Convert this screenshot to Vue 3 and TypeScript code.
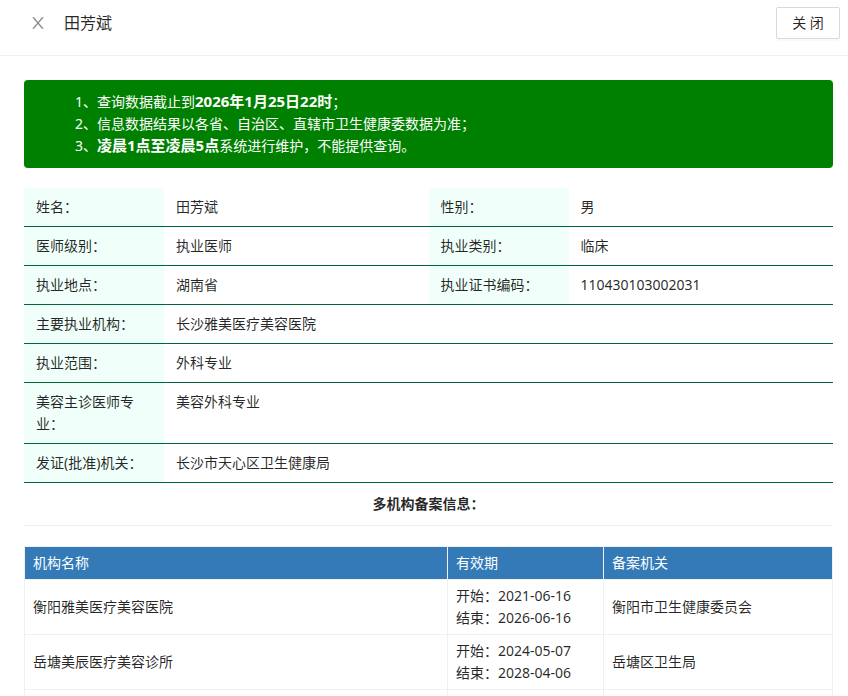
<script setup lang="ts">
interface Field {
  label: string
  value: string
}

interface Filing {
  name: string
  start: string
  end: string
  authority: string
}

const doctorName = '田芳斌'

const infoRows: Field[][] = [
  [
    { label: '姓名', value: '田芳斌' },
    { label: '性别', value: '男' },
  ],
  [
    { label: '医师级别', value: '执业医师' },
    { label: '执业类别', value: '临床' },
  ],
  [
    { label: '执业地点', value: '湖南省' },
    { label: '执业证书编码', value: '110430103002031' },
  ],
  [{ label: '主要执业机构', value: '长沙雅美医疗美容医院' }],
  [{ label: '执业范围', value: '外科专业' }],
  [{ label: '美容主诊医师专业', value: '美容外科专业' }],
  [{ label: '发证(批准)机关', value: '长沙市天心区卫生健康局' }],
]

const filings: Filing[] = [
  { name: '衡阳雅美医疗美容医院', start: '2021-06-16', end: '2026-06-16', authority: '衡阳市卫生健康委员会' },
  { name: '岳塘美辰医疗美容诊所', start: '2024-05-07', end: '2028-04-06', authority: '岳塘区卫生局' },
]
</script>

<template>
  <div class="drawer">
    <header class="head">
      <button type="button" class="dismiss">
        <svg viewBox="64 64 896 896" width="16" height="16" fill="currentColor" aria-hidden="true">
          <path
            d="M563.8 512l262.5-312.9c4.4-5.2.7-13.1-6.1-13.1h-79.8c-4.7 0-9.2 2.1-12.3 5.7L511.6 449.8 295.1 191.7c-3-3.6-7.5-5.7-12.3-5.7H203c-6.8 0-10.5 7.9-6.1 13.1L459.4 512 196.9 824.9A7.95 7.95 0 00203 838h79.8c4.7 0 9.2-2.1 12.3-5.7l216.5-258.1 216.5 258.1c3 3.6 7.5 5.7 12.3 5.7h79.8c6.8 0 10.5-7.9 6.1-13.1L563.8 512z"
          />
        </svg>
      </button>
      <h1 class="title">{{ doctorName }}</h1>
      <button type="button" class="close">关 闭</button>
    </header>

    <main class="body">
      <div class="notice">
        <p>1、查询数据截止到<strong>2026年1月25日22时</strong>；</p>
        <p>2、信息数据结果以各省、自治区、直辖市卫生健康委数据为准；</p>
        <p>3、<strong>凌晨1点至凌晨5点</strong>系统进行维护，不能提供查询。</p>
      </div>

      <table class="info">
        <colgroup>
          <col class="label-col" />
          <col />
          <col class="label-col" />
          <col />
        </colgroup>
        <tbody>
          <tr v-for="(row, i) in infoRows" :key="i">
            <template v-for="field in row" :key="field.label">
              <th scope="row">{{ field.label }}：</th>
              <td :colspan="row.length === 1 ? 3 : 1">{{ field.value }}</td>
            </template>
          </tr>
        </tbody>
      </table>

      <h2 class="section">多机构备案信息：</h2>

      <table class="filings">
        <colgroup>
          <col />
          <col class="period-col" />
          <col class="authority-col" />
        </colgroup>
        <thead>
          <tr>
            <th scope="col">机构名称</th>
            <th scope="col">有效期</th>
            <th scope="col">备案机关</th>
          </tr>
        </thead>
        <tbody>
          <tr v-for="filing in filings" :key="filing.name">
            <td>{{ filing.name }}</td>
            <td>
              <div>开始：{{ filing.start }}</div>
              <div>结束：{{ filing.end }}</div>
            </td>
            <td>{{ filing.authority }}</td>
          </tr>
          <tr class="blank">
            <td></td>
            <td></td>
            <td></td>
          </tr>
        </tbody>
      </table>
    </main>
  </div>
</template>

<style>
body {
  margin: 0;
  background: #fff;
}
</style>

<style scoped>
.drawer {
  display: flex;
  flex-direction: column;
  height: 100vh;
  overflow: hidden;
  color: rgba(0, 0, 0, 0.85);
  font-family: 'Noto Sans', 'Noto Sans CJK SC', sans-serif;
  font-size: 14px;
  line-height: 22px;
}

.head {
  display: flex;
  flex: none;
  align-items: center;
  padding: 7px 8px 16px 30px;
  border-bottom: 1px solid #f0f0f0;
}

.dismiss {
  display: flex;
  margin: 0 18px 0 0;
  padding: 0;
  border: 0;
  background: none;
  color: rgba(0, 0, 0, 0.45);
}

.title {
  flex: 1;
  margin: 0;
  font-size: 16px;
  font-weight: 400;
  line-height: 22px;
}

.close {
  box-sizing: border-box;
  min-width: 64px;
  height: 32px;
  padding: 0 15px;
  border: 1px solid #d9d9d9;
  border-radius: 2px;
  background: #fff;
  box-shadow: 0 2px 0 rgba(0, 0, 0, 0.02);
  color: inherit;
  font: inherit;
  white-space: nowrap;
}

.body {
  flex: 1;
  min-height: 0;
  padding: 24px 15px 0 24px;
  overflow: hidden;
}

.notice {
  margin-bottom: 20px;
  padding: 11px 51px;
  border-radius: 4px;
  background: #008000;
  color: #fff;
}

.notice p {
  margin: 0;
}

.notice strong {
  font-size: 15px;
  line-height: 20px;
}

table {
  width: 100%;
  border-collapse: separate;
  border-spacing: 0;
  table-layout: fixed;
}

th {
  font-weight: 400;
  text-align: left;
}

.label-col {
  width: 140px;
}

.info th,
.info td {
  padding: 8px 12px;
  border-bottom: 1px solid #006837;
  vertical-align: top;
}

.info th {
  background: #f0fff9;
}

.section {
  margin: 0 0 20px;
  padding: 10px 0;
  border-bottom: 1px solid #f0f0f0;
  font-size: 14px;
  font-weight: 700;
  line-height: 22px;
  text-align: center;
}

.period-col {
  width: 156px;
}

.authority-col {
  width: 229px;
}

.filings {
  border-top: 1px solid #f0f0f0;
  border-left: 1px solid #f0f0f0;
}

.filings th,
.filings td {
  padding: 5px 8px;
  border-right: 1px solid #f0f0f0;
  border-bottom: 1px solid #f0f0f0;
  vertical-align: middle;
}

.filings th {
  background: #337ab7;
  color: #fff;
}

.blank td {
  height: 44px;
}
</style>
